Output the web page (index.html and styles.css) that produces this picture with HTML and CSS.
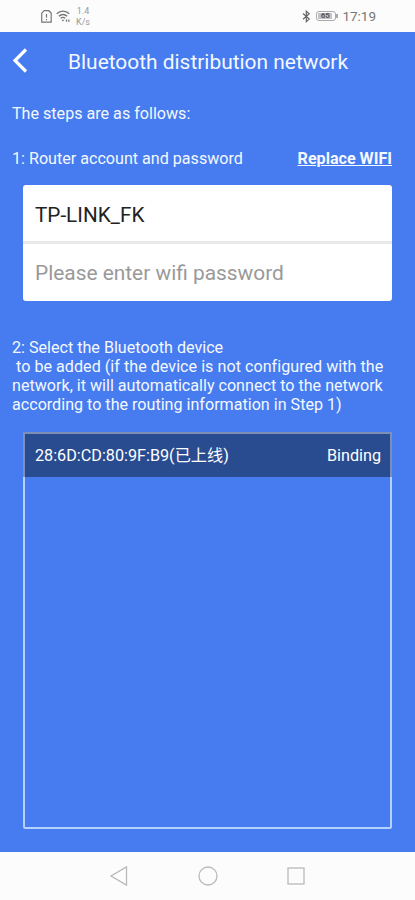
FILE: index.html
```html
<!DOCTYPE html>
<html lang="en">
<head>
<meta charset="utf-8">
<title>Bluetooth distribution network</title>
<link rel="stylesheet" href="styles.css">
</head>
<body>
<div class="status">
  <div class="status-left">
    <svg width="11" height="13" viewBox="0 0 11 13" fill="none" stroke="#777" stroke-width="1.2"><path d="M3.200.7h4.600l2.400 2.300v9.200H.7V3.200z"/><path d="M5.500 4v3.800M5.500 9v1.300"/></svg>
    <svg class="wifi" width="15" height="13" viewBox="0 0 15 13" fill="none" stroke="#777" stroke-width="1.3"><path d="M.7 3.800C4.200.2 9.800.2 13.300 3.800M2.800 6.200c2.400-2.300 6-2.300 8.400 0M4.700 8.300c1.400-1.200 3.200-1.200 4.600 0"/><path d="M5.500 9.700h3L7 11.500z" fill="#777" stroke="none"/><path d="M10.500 9.500v2.300M12.800 11.800V9.500"/></svg>
    <div class="speed"><span>1.4</span><span>K/s</span></div>
  </div>
  <div class="status-right">
    <svg width="9" height="13" viewBox="0 0 9 13" fill="none" stroke="#666" stroke-width="1.200"><path d="M1 3.500l6.200 5.600-2.900 2.600V1.200l2.900 2.500L1 9.300"/></svg>
    <div class="battery"><span>65</span></div>
    <span class="clock">17:19</span>
  </div>
</div>
<main>
  <header>
    <svg class="back" width="16" height="25" viewBox="0 0 16 25" fill="none" stroke="#fff" stroke-width="3.200"><path d="M14 1.500L3 12.500l11 11"/></svg>
    <h1>Bluetooth distribution network</h1>
  </header>
  <p class="intro">The steps are as follows:</p>
  <div class="step"><span>1: Router account and password</span><a class="replace">Replace WIFI</a></div>
  <div class="card">
    <div class="field ssid"><span>TP-LINK_FK</span></div>
    <div class="field hint"><span>Please enter wifi password</span></div>
  </div>
  <p class="second">2: Select the Bluetooth device
 <span class="wide">to be added (if the device is not configured with the</span>
network, it will automatically connect to the network
according to the routing information in Step 1)</p>
  <div class="devices">
    <div class="device"><span>28:6D:CD:80:9F:B9(已上线)</span><span>Binding</span></div>
  </div>
</main>
<nav>
  <svg width="20" height="22" viewBox="0 0 20 22"><path d="M17.500 2v18L2 11z"/></svg>
  <svg width="20" height="22" viewBox="0 0 20 22"><circle cx="10" cy="11" r="9"/></svg>
  <svg width="20" height="22" viewBox="0 0 20 22"><rect x="2" y="3" width="16" height="16"/></svg>
</nav>
</body>
</html>
```
FILE: styles.css
```css
* { box-sizing: border-box; }
body {
  margin: 0;
  width: 415px;
  height: 900px;
  display: flex;
  flex-direction: column;
  overflow: hidden;
  font-family: Roboto, "Noto Sans CJK SC", sans-serif;
  background: #fcfcfc;
}
.status {
  height: 32px;
  padding: 0 39px 0 41px;
  display: flex;
  justify-content: space-between;
  align-items: center;
  color: #777;
}
.status-left, .status-right { display: flex; align-items: center; }
.wifi { margin-left: 4px; }
.speed {
  margin-left: 5px;
  display: flex;
  flex-direction: column;
  align-items: center;
  font-size: 9px;
  line-height: 11px;
  color: #999;
}
.speed span:first-child { padding-top: 1px; }
.battery {
  position: relative;
  width: 20px;
  height: 10px;
  margin: 0 6px 0 5px;
  padding: 1px;
  border: 1px solid #aaa;
  border-radius: 3px;
}
.battery span {
  display: block;
  width: 14px;
  height: 6px;
  background: #c4c4c4;
  color: #555;
  font-size: 8px;
  line-height: 6px;
  font-weight: 700;
  text-align: center;
}
.battery::after {
  content: "";
  position: absolute;
  left: 19px;
  top: 2px;
  width: 2px;
  height: 4px;
  background: #aaa;
}
.clock { font-size: 13.500px; }
main {
  height: 820px;
  padding: 0 23px 0 12px;
  background: #467cf0;
  color: #f4f8ff;
  font-size: 16.120px;
  line-height: 19px;
}
header { height: 59px; display: flex; align-items: center; }
.back { margin-top: -2px; }
h1 { margin: 1px 0 0 40px; font-size: 20.920px; font-weight: 400; white-space: nowrap; }
p { margin: 0; }
.intro { padding-top: 13px; }
.step { margin-top: 26px; display: flex; justify-content: space-between; white-space: nowrap; }
.replace { font-weight: 700; text-decoration: underline; }
.card {
  height: 116px;
  margin: 17px 0 0 11px;
  background: #fff;
  border-radius: 3px;
}
.field { height: 57px; padding-left: 12px; display: flex; align-items: center; font-size: 20.880px; }
.ssid { height: 59px; padding-top: 4px; border-bottom: 3px solid #e9e9e9; color: #222; font-size: 20.700px; }
.hint { padding-top: 2px; color: #999; }
.second { margin-top: 37px; white-space: pre; }
.wide { letter-spacing: 0.03px; }
.devices {
  height: 397px;
  margin: 18px 0 0 11px;
  border: 2px solid #b4d2fc;
  border-radius: 2px;
}
.device {
  height: 45px;
  margin: -2px -2px 0;
  padding: 0 9px 0 10px;
  display: flex;
  justify-content: space-between;
  align-items: center;
  background: #294b90;
  border: 2px solid #7d8fb4;
  border-bottom: 0;
  color: #fff;
  font-size: 16.200px;
}
nav {
  height: 48px;
  padding: 0 109px;
  display: flex;
  justify-content: space-between;
  align-items: center;
}
nav svg { fill: none; stroke: #b9b9b9; stroke-width: 1.300; }
```
